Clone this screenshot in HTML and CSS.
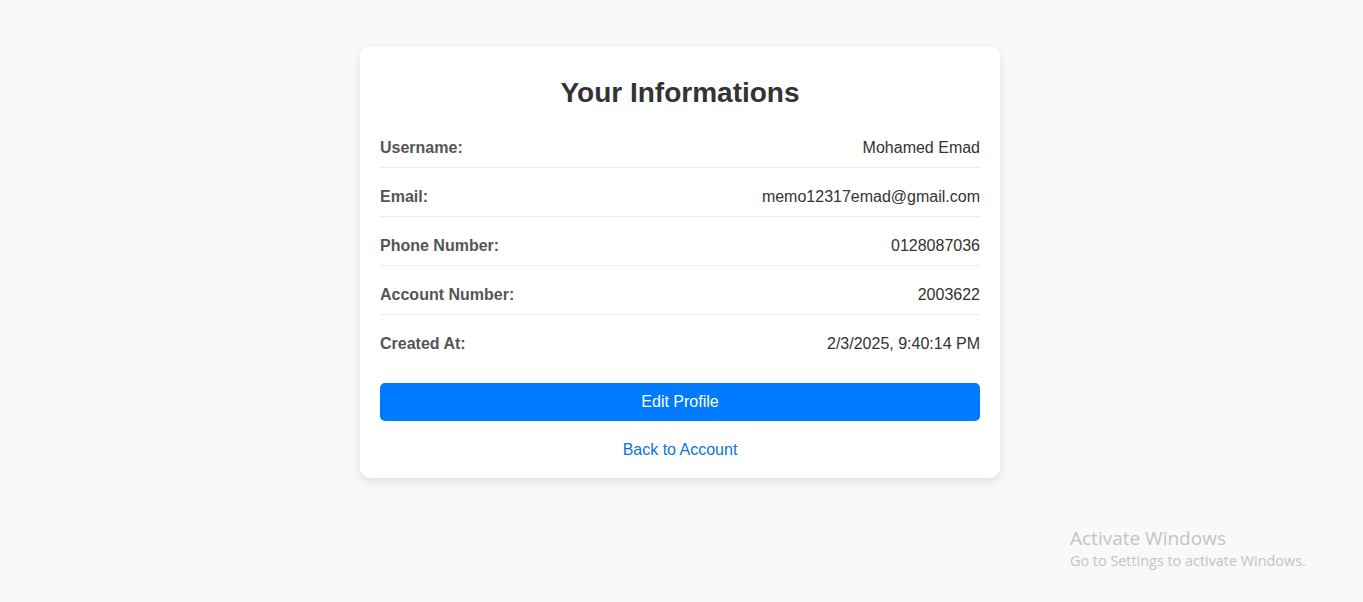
FILE: index.html
```html
<!DOCTYPE html>
<html lang="en">
<head>
<meta charset="utf-8">
<title>Your Informations</title>
<link rel="stylesheet" href="styles.css">
</head>
<body>
<main class="card">
  <h2 class="title">Your Informations</h2>
  <div class="row"><span class="label">Username:</span><span class="value">Mohamed Emad</span></div>
  <div class="row"><span class="label">Email:</span><span class="value">memo12317emad@gmail.com</span></div>
  <div class="row"><span class="label">Phone Number:</span><span class="value">0128087036</span></div>
  <div class="row"><span class="label">Account Number:</span><span class="value">2003622</span></div>
  <div class="row"><span class="label">Created At:</span><span class="value">2/3/2025, 9:40:14 PM</span></div>
  <button class="btn" type="button">Edit Profile</button>
  <a class="back" href="#">Back to Account</a>
</main>
<div class="watermark">
  <div class="wm-title">Activate Windows</div>
  <div class="wm-sub">Go to Settings to activate Windows.</div>
</div>
</body>
</html>
```
FILE: styles.css
```css
html, body {
  margin: 0;
  padding: 0;
}
body {
  background: #f9f9f9;
  font-family: "Liberation Sans", Arial, sans-serif;
  color: #333;
  min-height: 602px;
}
.card {
  width: 600px;
  margin: 47px 0 0 360px;
  padding: 30px 20px 19px;
  background: #fff;
  border-radius: 10px;
  box-shadow: 0 4px 10px rgba(0, 0, 0, 0.1);
}
.title {
  margin: 0 0 20px;
  font-size: 28px;
  font-weight: bold;
  text-align: center;
  color: #333;
}
.row {
  display: flex;
  justify-content: space-between;
  padding: 10px 0;
  margin-bottom: 10px;
  font-size: 16px;
  line-height: 18px;
  border-bottom: 1px solid #eee;
}
.row:last-of-type {
  border-bottom: none;
  margin-bottom: 0;
}
.label {
  font-weight: bold;
  color: #555;
}
.value {
  color: #333;
}
.btn {
  display: block;
  width: 100%;
  margin-top: 20px;
  padding: 10px;
  border: none;
  border-radius: 5px;
  background: #007bff;
  color: #fff;
  font-family: "Liberation Sans", Arial, sans-serif;
  font-size: 16px;
  line-height: 18px;
}
.back {
  display: block;
  margin-top: 20px;
  text-align: center;
  color: #0a74e0;
  text-decoration: none;
  font-size: 16px;
  line-height: 18px;
}
.watermark {
  position: absolute;
  left: 1070px;
  top: 526px;
  font-family: "Open Sans", "Noto Sans", sans-serif;
  color: #c3c3c3;
}
.wm-title {
  font-size: 19px;
  line-height: 24px;
}
.wm-sub {
  font-size: 14.4px;
  line-height: 21px;
}
```
